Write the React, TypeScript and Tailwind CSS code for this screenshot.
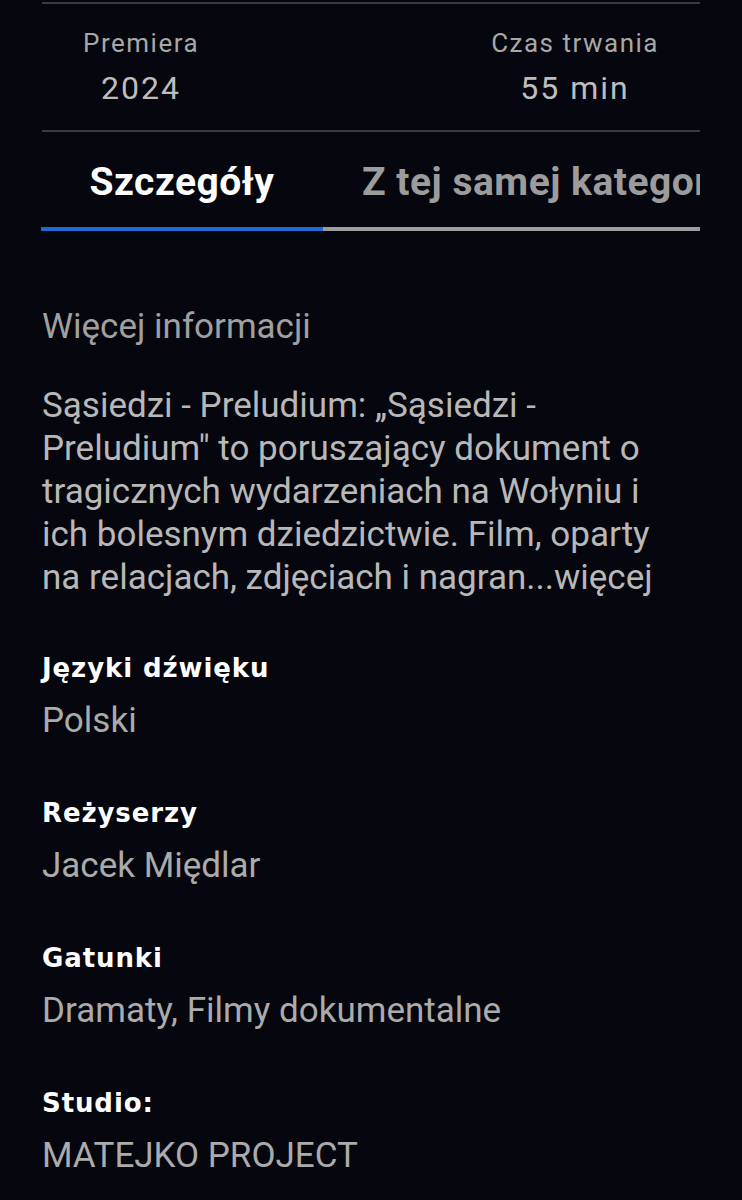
import { useState } from "react";

type Detail = { label: string; value: string };

const details: Detail[] = [
  { label: "Języki dźwięku", value: "Polski" },
  { label: "Reżyserzy", value: "Jacek Międlar" },
  { label: "Gatunki", value: "Dramaty, Filmy dokumentalne" },
  { label: "Studio:", value: "MATEJKO PROJECT" },
];

const tabs = ["Szczegóły", "Z tej samej kategorii"];

function Meta({ label, value }: { label: string; value: string }) {
  return (
    <div className="flex flex-col items-center">
      <span className="text-[26px] leading-[32px] tracking-[1.5px] text-[#a8a8a8]">{label}</span>
      <span className="mt-[11px] text-[32px] leading-[36px] tracking-[2px] text-[#bdbdbd]">{value}</span>
    </div>
  );
}

export default function App() {
  const [active, setActive] = useState(0);

  return (
    <div className="min-h-[1200px] bg-[#05060e] pt-[2px] font-['Roboto',sans-serif]">
      <div className="mx-[42px] border-t-2 border-[#383a41]">
        <div className="flex justify-between px-[41px] pt-[23px] pb-[24px]">
          <Meta label="Premiera" value="2024" />
          <Meta label="Czas trwania" value="55 min" />
        </div>
      </div>
      <div className="mx-[42px] border-t-2 border-[#383a41]" />

      {/* tabs */}
      <div className="ml-[41px] mr-[42px] mt-[26px] flex overflow-hidden">
        {tabs.map((t, i) => (
          <button
            key={t}
            onClick={() => setActive(i)}
            className={`shrink-0 whitespace-nowrap border-b-4 pb-[21px] text-[39px] font-bold leading-[48px] tracking-[0.5px] ${
              i === 0 ? "w-[282px] text-center" : "pl-[39px] text-left"
            } ${active === i ? "border-[#1e6ad6] text-white" : "border-[#9c9c9c] text-[#9c9c9c]"}`}
          >
            {t}
          </button>
        ))}
      </div>

      <div className="px-[42px] pt-[76px]">
        <p className="text-[35px] leading-[40px] text-[#a0a0a0]">Więcej informacji</p>
        <p className="mt-[37px] max-w-[630px] text-[35px] leading-[43px] text-[#b8b8b8]">
          Sąsiedzi - Preludium: „Sąsiedzi - Preludium" to poruszający dokument o tragicznych
          wydarzeniach na Wołyniu i ich bolesnym dziedzictwie. Film, oparty na relacjach,
          zdjęciach i nagran...więcej
        </p>

        <div className="mt-[53px] flex flex-col gap-[56px]">
          {details.map((d) => (
            <div key={d.label}>
              <h3 className="font-['DejaVu_Sans',sans-serif] text-[26px] font-bold leading-[32px] tracking-[0.9px] text-white">
                {d.label}
              </h3>
              <p className="mt-[17px] text-[35px] leading-[40px] text-[#ababab]">{d.value}</p>
            </div>
          ))}
        </div>
      </div>
    </div>
  );
}
